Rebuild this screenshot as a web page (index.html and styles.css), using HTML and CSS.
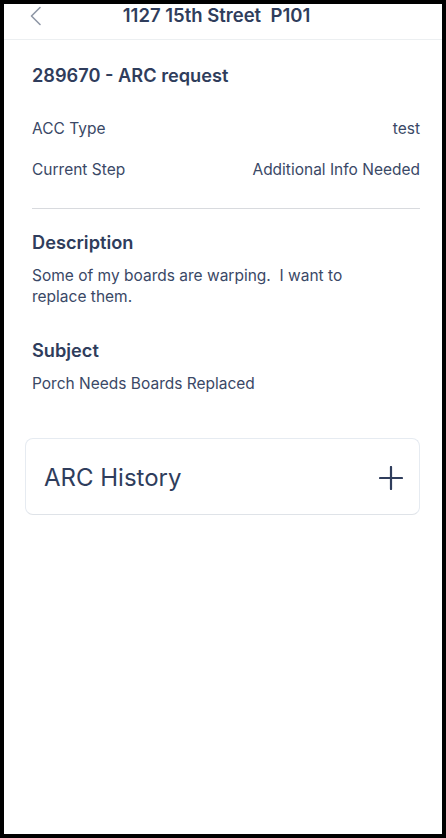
FILE: index.html
```html
<!DOCTYPE html>
<html lang="en">
<head>
<meta charset="utf-8">
<title>ARC request</title>
<link rel="stylesheet" href="styles.css">
</head>
<body>
<div class="screen">
  <header class="topbar">
    <span class="back">
      <svg width="14" height="20" viewBox="0 0 14 20"><path d="M11 1.5 L2.5 10 L11 18.5" fill="none" stroke="#8f97a6" stroke-width="1.6" stroke-linecap="round" stroke-linejoin="round"/></svg>
    </span>
    <h1 class="title">1127 15th Street&nbsp; P101</h1>
  </header>
  <main class="content">
    <h2 class="req-title">289670 - ARC request</h2>
    <div class="rows">
      <div class="row"><span>ACC Type</span><span>test</span></div>
      <div class="row"><span>Current Step</span><span>Additional Info Needed</span></div>
    </div>
    <hr class="divider">
    <section class="block">
      <h3 class="block-title">Description</h3>
      <p class="block-text narrow">Some of my boards are warping.&nbsp; I want to replace them.</p>
    </section>
    <section class="block">
      <h3 class="block-title">Subject</h3>
      <p class="block-text">Porch Needs Boards Replaced</p>
    </section>
    <div class="card">
      <span class="card-title">ARC History</span>
      <svg class="plus" width="24" height="24" viewBox="0 0 24 24"><path d="M12 1 V23 M1 12 H23" stroke="#2f3d5c" stroke-width="2.2" stroke-linecap="round"/></svg>
    </div>
  </main>
</div>
</body>
</html>
```
FILE: styles.css
```css
* { box-sizing: border-box; }
html, body { margin: 0; padding: 0; }
body {
  background: #000;
  width: 446px;
  height: 838px;
  overflow: hidden;
  font-family: Inter, "Liberation Sans", sans-serif;
  color: #2f3d5c;
}
.screen {
  margin: 4px;
  height: 830px;
  background: #fff;
  overflow: hidden;
}
.topbar {
  height: 36px;
  border-bottom: 1px solid #eceff1;
  display: flex;
  align-items: flex-start;
  padding-left: 25px;
  padding-top: 1px;
}
.back {
  display: flex;
  width: 14px;
  height: 20px;
  margin-top: 1px;
}
.title {
  margin: 0;
  flex: 1;
  text-align: center;
  font-size: 18.5px;
  line-height: 20px;
  font-weight: 600;
  padding-right: 52px;
  white-space: nowrap;
  color: #2f3d5c;
}
.content {
  padding: 0 22px 0 28px;
}
.req-title {
  margin: 23px 0 0;
  font-size: 18.2px;
  line-height: 24px;
  font-weight: 600;
}
.rows {
  margin-top: 32px;
  display: flex;
  flex-direction: column;
  gap: 21px;
}
.row {
  display: flex;
  justify-content: space-between;
  font-size: 15.5px;
  line-height: 20px;
  color: #3a4866;
}
.divider {
  margin: 28px 0 0;
  border: 0;
  border-top: 1px solid #d8dade;
  height: 0;
}
.block { margin-top: 21px; }
.block + .block { margin-top: 31px; }
.block-title {
  margin: 0;
  font-size: 18.2px;
  line-height: 24px;
  font-weight: 600;
}
.block-text {
  margin: 11px 0 0;
  font-size: 15.5px;
  line-height: 21px;
  color: #3a4866;
}
.narrow { max-width: 340px; }
.card {
  margin: 44px 0 0 -7px;
  height: 77px;
  border: 1px solid #e6ebf1;
  border-bottom-color: #dfe3e8;
  border-radius: 8px;
  display: flex;
  align-items: center;
  justify-content: space-between;
  padding: 2px 16px 0 18px;
}
.card-title {
  font-size: 24px;
  line-height: 30px;
  font-weight: 400;
  color: #2f3d5c;
}
.plus { display: block; }
```
